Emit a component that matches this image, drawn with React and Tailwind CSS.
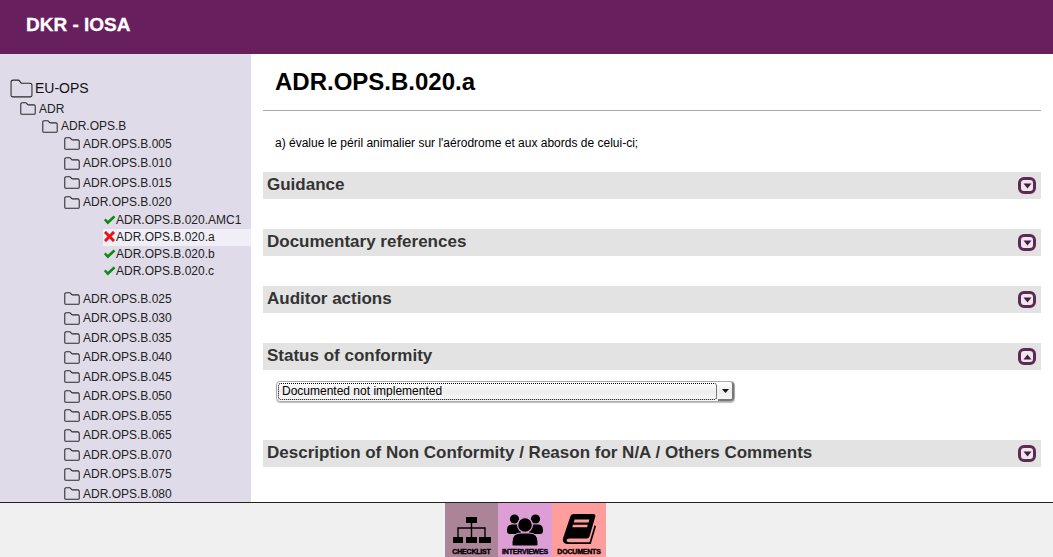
import React from "react";

const Folder = ({ w, h }) => (
  <svg width={w} height={h} viewBox="0 0 22 18" fill="none" stroke="#2a2a2a" strokeWidth={18 / h * 1.05} strokeLinejoin="round" className="shrink-0">
    <path d="M1 15.5V3q0-2 2-2h4.5q1.2 0 2 1.2l.8 1.2q.4.6 1.2.6H19q2 0 2 2v9.5q0 1.5-1.5 1.5h-17Q1 17 1 15.5z" />
  </svg>
);

const Check = () => (
  <svg width="13" height="10" viewBox="0 0 13 10" className="shrink-0">
    <path d="M1 5.2 L2.6 3.6 L4.8 5.8 L10.6 0.6 L12.4 2.2 L4.8 9.6z" fill="#0c8a12" />
  </svg>
);

const Cross = () => (
  <svg width="11" height="11" viewBox="0 0 11 11" className="shrink-0 ml-[1px] mr-[1px]">
    <path d="M2 2 L9 9 M9 2 L2 9" stroke="#ee1111" strokeWidth="3" strokeLinecap="square" />
  </svg>
);

const FolderRow = ({ label }) => (
  <div className="h-[19.5px] flex items-center pl-[64px] gap-[3px] text-[12px] text-[#222]">
    <Folder w={16} h={13} />
    <span>{label}</span>
  </div>
);

const Leaf = ({ label, status, active }) => (
  <div className="pl-[103px]">
    <div className={`h-[17px] pb-[2px] flex items-center text-[12px] text-[#222] ${active ? "bg-[#f0eef7]" : ""}`}>
      {status === "ok" ? <Check /> : <Cross />}
      <span>{label}</span>
    </div>
  </div>
);

const Toggle = ({ up }) => (
  <span className="w-[18px] h-[17px] rounded-[6px] border-[3px] border-[#5c2a52] bg-[#ece8ee] flex items-center justify-center shrink-0">
    <svg width="9" height="6" viewBox="0 0 9 6">
      <path d={up ? "M0.5 5.5 L4.5 0.5 L8.5 5.5z" : "M0.5 0.5 L8.5 0.5 L4.5 5.5z"} fill="#4a1a42" />
    </svg>
  </span>
);

const Section = ({ title, up, className = "" }) => (
  <div className={`h-[26.5px] bg-[#e3e3e3] flex items-center justify-between pl-[4px] pr-[5px] ${className}`}>
    <h3 className="text-[17px] font-bold text-[#333] leading-none pb-[1px]">{title}</h3>
    <span className="mt-[1px]"><Toggle up={up} /></span>
  </div>
);

const FootBtn = ({ icon, label, bg, w }) => (
  <div className={`h-[54px] flex flex-col items-center justify-end ${bg} ${w}`}>
    {icon}
    <span className="text-[7px] font-bold text-black leading-none pb-[2px] mt-[3px] tracking-[-0.2px] [-webkit-text-stroke:0.4px_black]">{label}</span>
  </div>
);

const ChecklistIcon = () => (
  <svg width="38" height="26" viewBox="0 0 38 26" className="mb-[2px]">
    <path d="M18.5 6V11 M5 20V11H32V20 M18.5 11V20" fill="none" stroke="#000" strokeWidth="1.4" />
    <rect x="13" y="0" width="11" height="6" fill="#000" />
    <rect x="0" y="20" width="10" height="6" fill="#000" />
    <rect x="13" y="20" width="11" height="6" fill="#000" />
    <rect x="26" y="20" width="12" height="6" fill="#000" />
  </svg>
);

const InterviewIcon = () => (
  <svg width="36" height="32" viewBox="0 0 36 32" className="-mb-[1px]">
    <circle cx="7.5" cy="5" r="4.6" fill="#000" />
    <circle cx="28.5" cy="5" r="4.6" fill="#000" />
    <path d="M0 16Q0 10.5 5 10.5H11Q14 10.5 14 14V20H3Q0 20 0 17z" fill="#000" />
    <path d="M36 16Q36 10.5 31 10.5H25Q22 10.5 22 14V20H33Q36 20 36 17z" fill="#000" />
    <circle cx="18" cy="11" r="7.4" fill="#000" stroke="#dd9ed6" strokeWidth="1.2" />
    <path d="M5 31V28Q5 19 14 19H22Q31 19 31 28V31Q31 32 29 32H7Q5 32 5 31z" fill="#000" stroke="#dd9ed6" strokeWidth="1" />
  </svg>
);

const BookIcon = () => (
  <svg width="34" height="30" viewBox="0 0 34 30" className="mb-[1px]">
    <path d="M8.5 2Q9.2 0 12 0H31Q34 0 33.2 3L27.5 22.5Q27 24.5 24.5 24.5H7.5Q4.6 24.5 4.6 26.5Q4.6 28.2 7.5 28.2H27.5L32.6 11L34 12.5L28.8 30H6Q0.4 30 0.8 25z" fill="#000" />
    <path d="M12.6 5.5H27.4L26.6 8.5H11.7z M11 10.8H25.8L25 13.2H10.3z" fill="#ff9c9c" />
  </svg>
);

export default function App() {
  return (
    <div className="w-[1053px] h-[557px] flex flex-col overflow-hidden bg-white font-['Liberation_Sans',Arial,sans-serif]">
      <header className="h-[54px] shrink-0 bg-[#671f5e] flex items-center pl-[26px] pb-[4px]">
        <h1 className="text-[19px] font-bold text-white [-webkit-text-stroke:0.3px_white]">DKR - IOSA</h1>
      </header>

      <div className="flex flex-1 min-h-0">
        <aside className="w-[251px] shrink-0 bg-[#dfdbe9] overflow-hidden pt-[24px]">
          <div className="h-[20px] flex items-center pl-[10px] gap-[2px] text-[14px] text-[#111]">
            <Folder w={23} h={19} />
            <span>EU-OPS</span>
          </div>
          <div className="h-[20px] pt-[1px] flex items-center pl-[20px] gap-[3px] text-[12px] text-[#222]">
            <Folder w={16} h={13} />
            <span>ADR</span>
          </div>
          <div className="h-[16px] flex items-center pl-[42px] gap-[3px] text-[12px] text-[#222]">
            <Folder w={16} h={13} />
            <span>ADR.OPS.B</span>
          </div>
          <FolderRow label="ADR.OPS.B.005" />
          <FolderRow label="ADR.OPS.B.010" />
          <FolderRow label="ADR.OPS.B.015" />
          <FolderRow label="ADR.OPS.B.020" />
          <Leaf label="ADR.OPS.B.020.AMC1" status="ok" />
          <Leaf label="ADR.OPS.B.020.a" status="ko" active />
          <Leaf label="ADR.OPS.B.020.b" status="ok" />
          <Leaf label="ADR.OPS.B.020.c" status="ok" />
          <div className="h-[9px]" />
          {["025", "030", "035", "040", "045", "050", "055", "065", "070", "075", "080"].map((n) => (
            <FolderRow key={n} label={`ADR.OPS.B.${n}`} />
          ))}
        </aside>

        <main className="flex-1 min-w-0 pl-[12px] pr-[12px] overflow-hidden">
          <h2 className="text-[24px] font-bold text-black pl-[12px] h-[57px] flex items-center border-b border-[#aaa]">ADR.OPS.B.020.a</h2>
          <p className="text-[12px] text-black pl-[12px] mt-[25px] leading-[14px]">a) évalue le péril animalier sur l'aérodrome et aux abords de celui-ci;</p>
          <Section title="Guidance" className="mt-[22px]" />
          <Section title="Documentary references" className="mt-[30.5px]" />
          <Section title="Auditor actions" className="mt-[30.5px]" />
          <Section title="Status of conformity" up className="mt-[30.5px]" />
          <div className="ml-[13px] mt-[11.5px] w-[459px] h-[21px] flex rounded-[4px] border border-[#aaa] bg-gradient-to-b from-[#ffffff] via-[#eeeeee] to-[#f8f8f8] shadow-[0_1px_1px_rgba(0,0,0,0.25)]">
            <div className="flex-1 m-[1px] border border-dotted border-black flex items-center rounded-[3px]">
              <select className="w-full h-[14px] -mt-[1px] appearance-none bg-transparent text-[12px] text-black pl-[3px] leading-none outline-none font-['Liberation_Sans',Arial,sans-serif]" defaultValue="d">
                <option value="d">Documented not implemented</option>
              </select>
            </div>
            <div className="w-[16px] flex items-center justify-center border-r-2 border-b-2 border-[#777] rounded-r-[3px]">
              <svg width="7" height="4" viewBox="0 0 7 4"><path d="M0 0 H7 L3.5 4z" fill="#111" /></svg>
            </div>
          </div>
          <Section title="Description of Non Conformity / Reason for N/A / Others Comments" className="mt-[38px]" />
        </main>
      </div>

      <footer className="h-[55px] shrink-0 bg-[#f0f0f0] border-t border-[#222] flex justify-center">
        <div className="flex ml-[-2px]">
          <FootBtn bg="bg-[#ab8597]" w="w-[53px]" label="CHECKLIST" icon={<ChecklistIcon />} />
          <FootBtn bg="bg-[#dd9ed6]" w="w-[54px]" label="INTERVIEWES" icon={<InterviewIcon />} />
          <FootBtn bg="bg-[#ff9c9c]" w="w-[54px]" label="DOCUMENTS" icon={<BookIcon />} />
        </div>
      </footer>
    </div>
  );
}
